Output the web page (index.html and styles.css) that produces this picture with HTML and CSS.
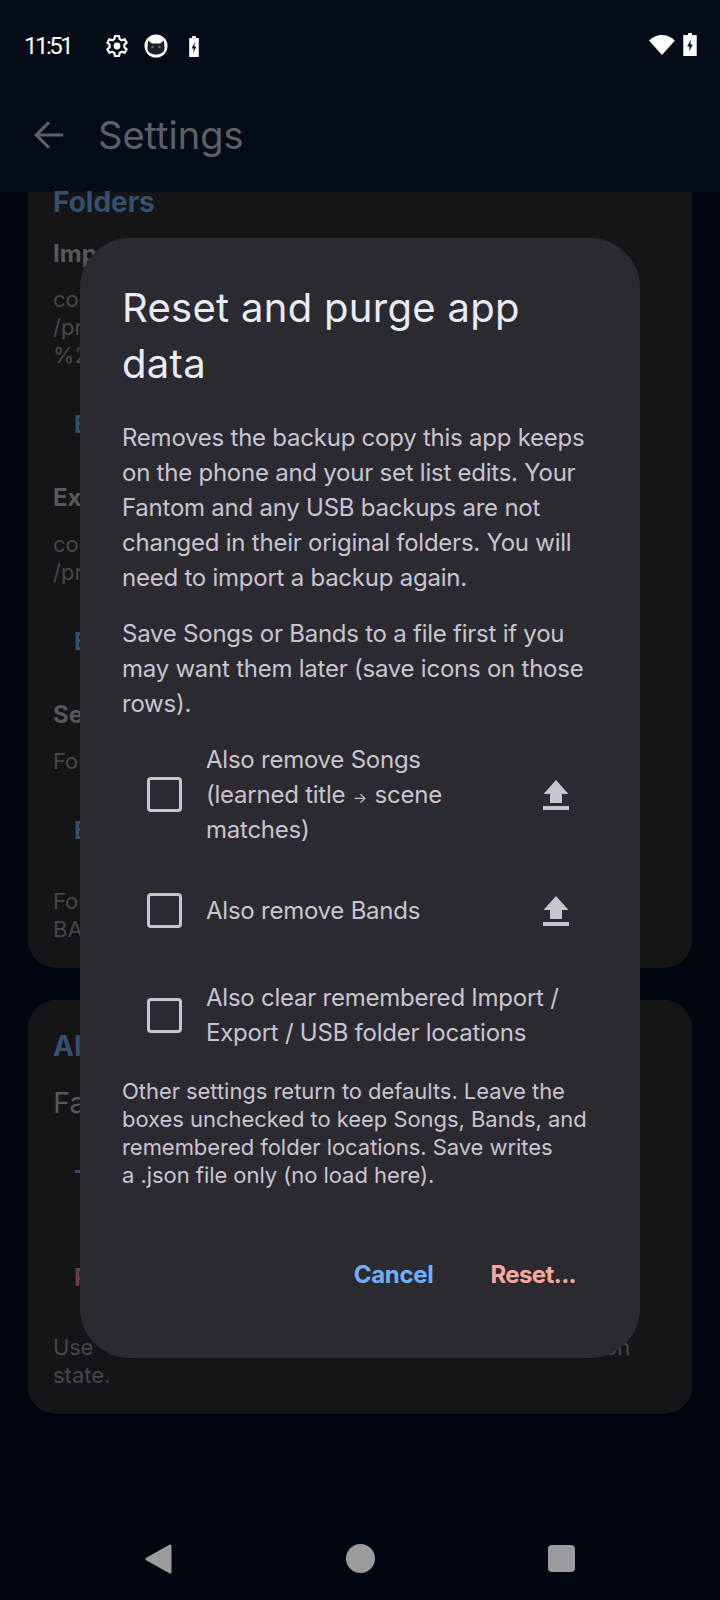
FILE: index.html
```html
<!DOCTYPE html>
<html lang="en">
<head>
<meta charset="utf-8">
<title>Settings</title>
<link rel="stylesheet" href="styles.css">
</head>
<body>
<div class="screen">
  <header class="top">
    <div class="status">
      <span class="time">11:51</span>
      <svg class="st-icon gear" viewBox="0 0 24 24"><path fill="none" stroke="#fff" stroke-width="2.200" stroke-linejoin="round" d="M10 2h4l.6 3 2.200 1.200 2.900-1 2 3.500-2.300 2v2.600l2.300 2-2 3.500-2.900-1-2.200 1.200-.6 3h-4l-.6-3-2.200-1.200-2.900 1-2-3.500 2.300-2v-2.600l-2.300-2 2-3.500 2.900 1L9.400 5z"/><circle cx="12" cy="12" r="3.400" fill="#fff"/></svg>
      <svg class="st-icon cat" viewBox="0 0 24 24"><circle cx="12" cy="12" r="11.500" fill="#fff"/><path fill="#1a1f28" d="M4 6.500l4 3h8l4-3 .5 8c0 3.500-3.500 6-8.500 6s-8.500-2.500-8.500-6z"/><circle cx="8.500" cy="13" r="1.200" fill="#6a6f78"/><circle cx="15.500" cy="13" r="1.200" fill="#6a6f78"/></svg>
      <svg class="st-icon batt" viewBox="0 0 12 24"><path fill="#fff" d="M4 1h4v2h3v20H1V3h3z"/><path fill="#0a1018" d="M7 7l-3.500 7h2.300L5 19l3.500-7H6.200z"/></svg>
      <span class="spacer"></span>
      <svg class="wifi" viewBox="0 0 26 20"><path fill="#fff" d="M13 0C8 0 4 2 0 5.500L13 20 26 5.500C22 2 18 0 13 0z"/></svg>
      <svg class="st-icon batt2" viewBox="0 0 14 24"><path fill="#fff" d="M5 0h4v2h5v22H0V2h5z"/><path fill="#0a1018" d="M8 7l-4 7h2.500L6 19l4-7H7.400z"/></svg>
    </div>
    <div class="appbar">
      <svg class="back" viewBox="0 0 24 24"><path fill="none" stroke="#5d6066" stroke-width="2.200" d="M22 12H3M12 3l-9 9 9 9"/></svg>
      <span class="apptitle">Settings</span>
    </div>
  </header>

  <main class="content">
    <section class="card first">
      <h2 class="sec">Folders</h2>
      <h3 class="lab">Imp</h3>
      <p class="val">con<br>/pr<br>%2</p>
      <div class="act">E</div>
      <h3 class="lab">Ex</h3>
      <p class="val">con<br>/pr</p>
      <div class="act">E</div>
      <h3 class="lab">Se</h3>
      <p class="val">Fol</p>
      <div class="act">E</div>
      <p class="val note">For<br>BA</p>
    </section>
    <section class="card second">
      <h2 class="sec">Alw</h2>
      <p class="big">Fan</p>
      <div class="act t">T</div>
      <div class="act r">R</div>
      <p class="val note2"><span class="just">Use this to reset saved data to a clean installation</span><span class="tail">state.</span></p>
    </section>
  </main>

  <footer class="nav">
    <svg class="nv tri" viewBox="0 0 28 30"><path fill="#9a9a9f" stroke="#9a9a9f" stroke-width="3" stroke-linejoin="round" d="M25 2v26L2 15z"/></svg>
    <span class="nv dot"></span>
    <span class="nv sq"></span>
  </footer>

  <div class="dialog">
    <h1 class="d-title">Reset and purge app data</h1>
    <p class="d-body">Removes the backup copy this app keeps on the phone and your set list edits. Your Fantom and any USB backups are not changed in their original folders. You will need to import a backup again.</p>
    <p class="d-body second-p">Save Songs or Bands to a file first if you may want them later (save icons on those rows).</p>
    <div class="opts">
      <div class="opt o1">
        <span class="box"></span>
        <span class="opt-text"><span class="ln">Also remove Songs</span><span class="ln">(learned title <span class="arr">→</span> scene</span><span class="ln">matches)</span></span>
        <svg class="save" viewBox="0 0 26 30"><path fill="#c9c4d0" d="M13 0L25.500 14H19V23H7V14H.5zM0 26h26v4H0z"/></svg>
      </div>
      <div class="opt o2">
        <span class="box"></span>
        <span class="opt-text">Also remove Bands</span>
        <svg class="save" viewBox="0 0 26 30"><path fill="#c9c4d0" d="M13 0L25.500 14H19V23H7V14H.5zM0 26h26v4H0z"/></svg>
      </div>
      <div class="opt o3">
        <span class="box"></span>
        <span class="opt-text wide">Also clear remembered Import / Export / USB folder locations</span>
      </div>
    </div>
    <p class="d-small">Other settings return to defaults. Leave the boxes unchecked to keep Songs, Bands, and remembered folder locations. Save writes a&nbsp;.json file only (no load here).</p>
    <div class="d-actions">
      <span class="btn cancel">Cancel</span>
      <span class="btn reset">Reset...</span>
    </div>
  </div>
</div>
</body>
</html>
```
FILE: styles.css
```css
* { box-sizing: border-box; }
html, body { margin: 0; padding: 0; background: #01060f; }
.screen {
  position: relative; width: 720px; height: 1600px; overflow: hidden;
  display: flex; flex-direction: column;
  font-family: "Inter", "Noto Sans", sans-serif; background: #01060f;
}
.top { height: 192px; background: #040c17; flex: none; }
.status { height: 92px; display: flex; align-items: center; padding: 0 23px 0 24px; }
.time { color: #fff; font-size: 24px; width: 81px; letter-spacing: -2.500px; font-family: "Roboto", sans-serif; }
.st-icon { display: block; }
.gear { width: 24px; height: 24px; }
.cat { width: 24px; height: 24px; margin-left: 15px; }
.batt { width: 12px; height: 23px; margin-left: 20px; }
.spacer { flex: 1; }
.wifi { width: 26px; height: 20px; margin-top: -3px; }
.batt2 { width: 14px; height: 23px; margin-left: 8px; margin-top: -3px; }
.appbar { height: 80px; display: flex; align-items: center; padding: 6px 0 0 32px; }
.back { width: 34px; height: 34px; }
.apptitle { margin-left: 32px; color: #5d6066; font-size: 38px; }

.content { flex: 1; padding: 0 28px; display: flex; flex-direction: column; gap: 32px; min-height: 0; }
.card { background: #151517; border-radius: 28px; padding: 0 25px; flex: none; }
.card.first { height: 776px; border-radius: 0 0 28px 28px; }
.card.second { height: 414px; padding-top: 28px; }
.sec { margin: 0; color: #35506f; font-size: 28px; line-height: 36px; font-weight: 700; }
.first .sec { line-height: 20px; }
.lab { margin: 37px 0 0; color: #55585d; font-size: 24px; line-height: 36px; font-weight: 700; }
.first .sec + .lab { margin-top: 24px; }
.val { margin: 14px 0 0; color: #45474b; font-size: 22px; line-height: 28px; white-space: nowrap; }
.first .sec + .lab + .val { margin-top: 13px; }
.act { margin: 38px 0 0 21px; color: #35506f; font-size: 24px; font-weight: 700; line-height: 36px; }
.big { margin: 19px 0 0; color: #55585d; font-size: 29px; line-height: 40px; }
.act.t { margin-top: 39px; }
.act.r { color: #6b403e; margin-top: 62px; }
.note { margin-top: 38px; }
.note2 { margin-top: 37px; width: 577px; }
.just { display: block; text-align: justify; text-align-last: justify; letter-spacing: -.2px; }
.tail { display: block; }

.nav { height: 0; flex: none; display: flex; align-items: center; justify-content: space-between; }
.nv { position: absolute; top: 1544px; display: block; }
.tri { left: 145px; width: 28px; height: 30px; }
.dot { left: 346px; width: 29px; height: 29px; border-radius: 50%; background: #9a9a9f; }
.sq { left: 548px; width: 27px; height: 27px; border-radius: 4px; background: #9a9a9f; top: 1545px; }

.dialog {
  position: absolute; left: 80px; top: 238px; width: 560px; height: 1120px;
  background: #2b2a30; border-radius: 50px; padding: 42px 42px 0 42px; color: #c9c4d0;
}
.d-title { margin: 0; font-size: 40px; line-height: 56px; font-weight: 400; color: #e8ecfa; letter-spacing: .3px; }
.d-body { margin: 28px 0 0; font-size: 24px; line-height: 35px; letter-spacing: -.24px; }
.second-p { margin-top: 21px; }
.opts { margin-top: 21px; display: flex; flex-direction: column; }
.opt { display: flex; align-items: center; padding-left: 25px; }
.box { width: 35px; height: 35px; border: 3px solid #c9c4d0; border-radius: 4px; flex: none; }
.opt-text { margin-left: 24px; font-size: 24px; line-height: 35px; flex: 1; letter-spacing: -.24px; max-width: 290px; }
.opt-text.wide { max-width: 370px; }
.ln { display: block; height: 35px; white-space: nowrap; }
.arr { font-size: 15px; line-height: 0; letter-spacing: 0; margin: 0 1px; }
.save { width: 26px; height: 30px; margin-left: auto; margin-right: 29px; flex: none; }
.o1 { height: 105px; }
.o2 { height: 35px; margin-top: 46px; }
.o3 { height: 70px; margin-top: 52px; }
.d-small { margin: 27px 0 0; font-size: 22px; line-height: 28px; letter-spacing: -.05px; }
.d-actions { display: flex; justify-content: flex-end; gap: 57px; padding-right: 22px; margin-top: 68px; }
.btn { font-size: 24px; font-weight: 700; line-height: 36px; letter-spacing: -.3px; }
.cancel { color: #6fb1ff; }
.reset { color: #ffa9a0; letter-spacing: -.6px; }
```
